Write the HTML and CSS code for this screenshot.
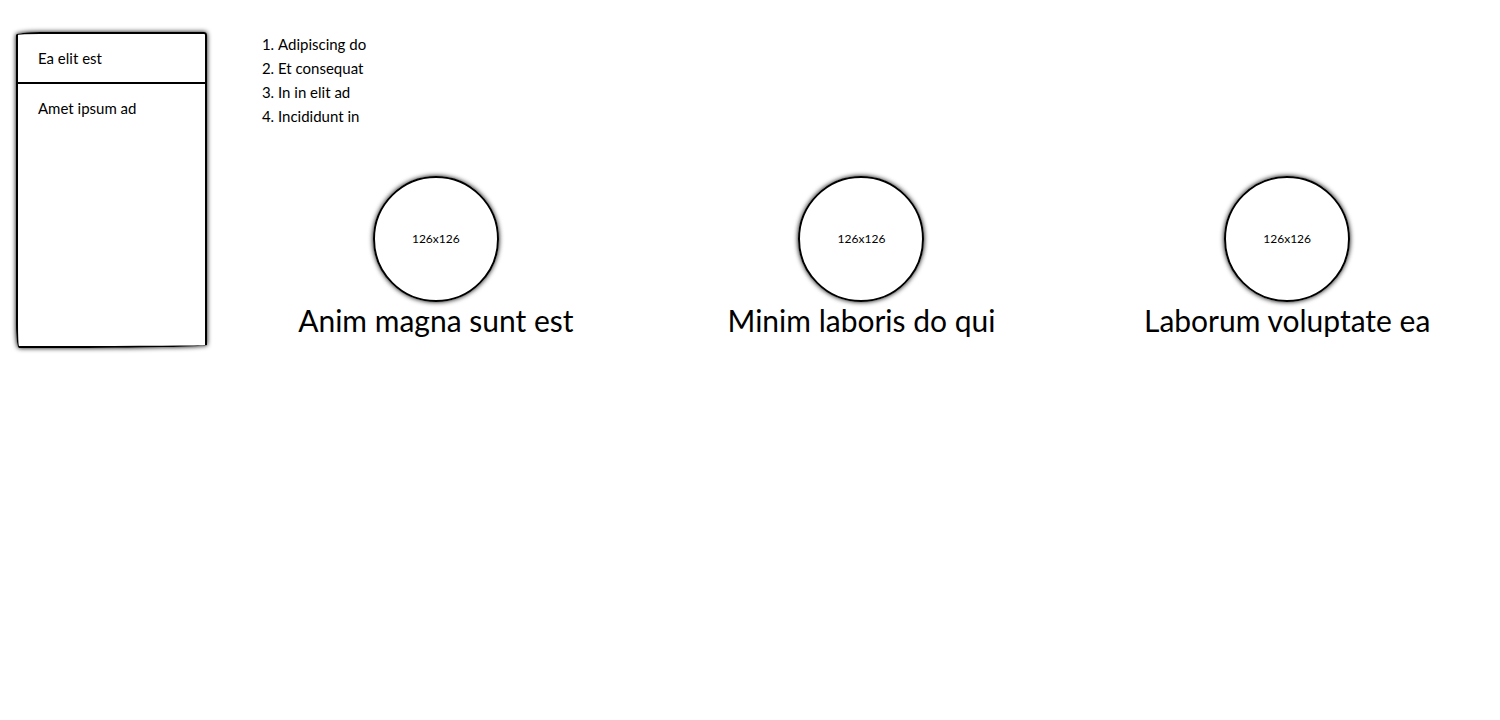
FILE: index.html
```html
<!DOCTYPE html>
<html lang="la">
<head>
<meta charset="utf-8">
<meta name="viewport" content="width=device-width, initial-scale=1">
<title>Adipiscing do</title>
<link rel="stylesheet" href="styles.css">
</head>
<body>
<div class="layout">
  <aside class="panel">
    <div class="panel-head">Ea elit est</div>
    <div class="panel-body">Amet ipsum ad</div>
  </aside>
  <main class="content">
    <ol class="steps">
      <li>Adipiscing do</li>
      <li>Et consequat</li>
      <li>In in elit ad</li>
      <li>Incididunt in</li>
    </ol>
    <div class="features">
      <section class="feature">
        <div class="avatar">126x126</div>
        <h2 class="feature-title">Anim magna sunt est</h2>
      </section>
      <section class="feature">
        <div class="avatar">126x126</div>
        <h2 class="feature-title">Minim laboris do qui</h2>
      </section>
      <section class="feature">
        <div class="avatar">126x126</div>
        <h2 class="feature-title">Laborum voluptate ea</h2>
      </section>
    </div>
  </main>
</div>
</body>
</html>
```
FILE: styles.css
```css
* {
  box-sizing: border-box;
}

body {
  margin: 0;
  background: #fff;
  color: #000;
  font-family: Lato, "Liberation Sans", Arial, sans-serif;
  font-size: 15px;
  line-height: 24px;
}

.layout {
  display: flex;
  align-items: flex-start;
  gap: 16px;
  min-height: 100vh;
  padding: 32px 0 32px 16px;
}

.panel {
  flex: 0 0 191px;
  min-height: 316px;
  border: 2px solid #000;
  border-radius: 24px 3px 150px 3px / 3px 3px 3px 24px;
  box-shadow: 0 0 5px #000;
}

.panel-head {
  padding: 12px 20px;
  border-bottom: 2px solid #000;
}

.panel-body {
  padding: 12px 20px;
}

.content {
  flex: 1;
  min-width: 0;
}

.steps {
  margin: 0 0 48px;
  padding-left: 55px;
}

.features {
  display: grid;
  grid-template-columns: repeat(3, 1fr);
}

.feature {
  display: flex;
  flex-direction: column;
  align-items: center;
}

.avatar {
  display: flex;
  align-items: center;
  justify-content: center;
  width: 126px;
  height: 126px;
  border: 2px solid #000;
  border-radius: 50%;
  box-shadow: 0 0 5px #000;
  font-size: 12px;
}

.feature-title {
  margin: 0;
  font-size: 30px;
  font-weight: 400;
  line-height: 36px;
  text-align: center;
}
```
